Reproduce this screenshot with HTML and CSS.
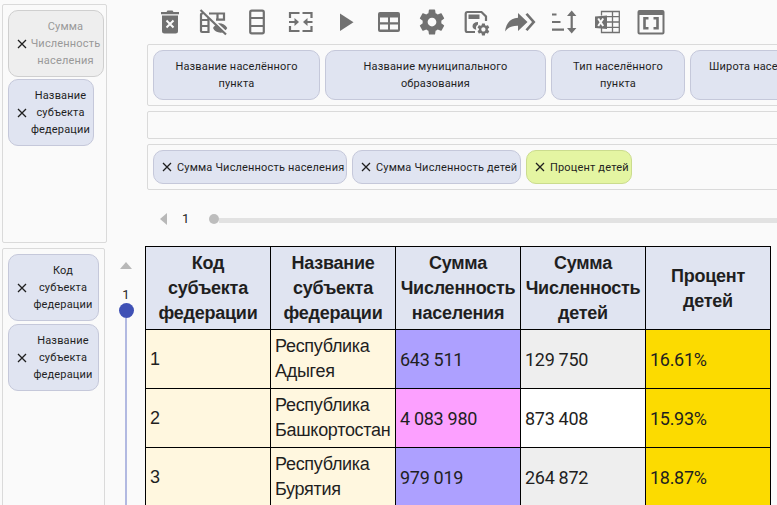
FILE: index.html
```html
<!DOCTYPE html>
<html lang="ru">
<head>
<meta charset="utf-8">
<title>Сводная таблица</title>
<link rel="stylesheet" href="styles.css">
</head>
<body>
<svg class="defs" width="0" height="0"><symbol id="close" viewBox="0 0 12 12"><path d="M2 2 10 10M10 2 2 10" fill="none" stroke="#1f1f1f" stroke-width="1.3"/></symbol></svg>
<div class="app">
  <aside class="side">
    <div class="zone zone-filter">
      <div class="chip tall muted"><svg class="x"><use href="#close"/></svg><span>Сумма<br>Численность<br>населения</span></div>
      <div class="chip tall narrow"><svg class="x"><use href="#close"/></svg><span>Название<br>субъекта<br>федерации</span></div>
    </div>
    <div class="zone zone-rows">
      <div class="chip tall"><svg class="x"><use href="#close"/></svg><span>Код<br>субъекта<br>федерации</span></div>
      <div class="chip tall"><svg class="x"><use href="#close"/></svg><span>Название<br>субъекта<br>федерации</span></div>
    </div>
  </aside>
  <main class="main">
    <nav class="toolbar">
      <svg viewBox="148 0 44 44"><path d="M161 12h5.500l1-1.500h5l1 1.500h5.500v2.200h-18zM162 15.500h16v15.500a2.500 2.500 0 0 1-2.500 2.500h-11a2.500 2.500 0 0 1-2.500-2.500z"/><path class="cut" d="m166.500 20.500 7 7m0-7-7 7"/></svg>
      <svg viewBox="192 0 44 44"><path class="line" d="M203 13.500h-1a1 1 0 0 0-1 1V31a1 1 0 0 0 1 1h6.500V18M201 20h7M201 26h7.500M209 13.500h15v6.200H216M217.500 13.500v6"/><path d="M213 28c1-2 2.500-3 4-3.300l7 7.300c-4 1.700-9.500 0-11-4zM218 23.200c4-.4 7.500 1.600 9.300 4.800-.5.900-1.100 1.600-1.800 2.300z"/><path class="line" d="m200.500 10 25.500 24.500"/></svg>
      <svg viewBox="236 0 44 44"><rect class="line" x="250.200" y="10.700" width="13.600" height="22.600" rx="1.500"/><path class="line" d="M250 18h14M250 26h14"/></svg>
      <svg viewBox="280 0 44 44"><path class="line" d="M290 18v-5h9.500M302.500 13h9v5M290 26v5h9.500M302.500 31h9v-5M289 22h7M312.500 22h-7"/><path d="m294.500 18 4.500 4-4.500 4zM307.500 18l-4.500 4 4.500 4z"/></svg>
      <svg viewBox="324 0 44 44"><path d="M340 13.500v17.500l13.500-8.700z"/></svg>
      <svg viewBox="368 0 44 44"><path fill-rule="evenodd" d="M380 12h18a2 2 0 0 1 2 2v16a2 2 0 0 1-2 2h-18a2 2 0 0 1-2-2V14a2 2 0 0 1 2-2zm0 5.500v4.700h8v-4.700zm10 0v4.700h8v-4.700zm-10 7v5h8v-5zm10 0v5h8v-5z"/></svg>
      <svg viewBox="412 0 44 44"><path transform="translate(417 7) scale(1.250)" d="M19.430 12.980c.04-.32.07-.64.07-.98s-.03-.66-.07-.98l2.110-1.650c.19-.15.24-.42.12-.64l-2-3.460c-.12-.22-.39-.3-.61-.22l-2.490 1c-.52-.4-1.080-.73-1.690-.98l-.38-2.650C14.460 2.180 14.250 2 14 2h-4c-.25 0-.46.18-.49.42l-.38 2.650c-.61.25-1.170.59-1.690.98l-2.490-1c-.23-.09-.49 0-.61.22l-2 3.460c-.13.22-.07.49.12.64l2.110 1.650c-.04.32-.07.65-.07.98s.03.66.07.98l-2.110 1.650c-.19.15-.24.42-.12.64l2 3.460c.12.22.39.3.61.22l2.490-1c.52.4 1.080.73 1.690.98l.38 2.650c.03.24.24.42.49.42h4c.25 0 .46-.18.49-.42l.38-2.650c.61-.25 1.170-.59 1.690-.98l2.490 1c.23.09.49 0 .61-.22l2-3.460c.12-.22.07-.49-.12-.64l-2.110-1.650zM12 15.500c-1.930 0-3.500-1.570-3.500-3.500s1.570-3.500 3.500-3.500 3.500 1.570 3.500 3.500-1.570 3.500-3.500 3.500z"/></svg>
      <svg viewBox="456 0 44 44"><path class="line" d="M475 32h-7.500a1.800 1.800 0 0 1-1.800-1.800V13.800a1.800 1.800 0 0 1 1.800-1.800h14l4.500 4.500V21"/><path d="M468.500 14.500h11v4.500h-11zM478 22v2.500c-2 1-2.500 3-1.700 5.200-2.400-.3-3.800-1.700-3.800-3.500 0-2.400 2-4.200 5.500-4.200z"/><path transform="translate(476.200 22.200) scale(.6)" d="M19.430 12.980c.04-.32.07-.64.07-.98s-.03-.66-.07-.98l2.110-1.650c.19-.15.24-.42.12-.64l-2-3.460c-.12-.22-.39-.3-.61-.22l-2.490 1c-.52-.4-1.080-.73-1.690-.98l-.38-2.650C14.460 2.180 14.250 2 14 2h-4c-.25 0-.46.18-.49.42l-.38 2.650c-.61.25-1.170.59-1.690.98l-2.490-1c-.23-.09-.49 0-.61.22l-2 3.460c-.13.22-.07.49.12.64l2.110 1.650c-.04.32-.07.65-.07.98s.03.66.07.98l-2.110 1.650c-.19.15-.24.42-.12.64l2 3.460c.12.22.39.3.61.22l2.490-1c.52.4 1.080.73 1.690.98l.38 2.650c.03.24.24.42.49.42h4c.25 0 .46-.18.49-.42l.38-2.650c.61-.25 1.170-.59 1.690-.98l2.490 1c.23.09.49 0 .61-.22l2-3.460c.12-.22.07-.49-.12-.64l-2.110-1.650zM12 15.500c-1.930 0-3.500-1.570-3.500-3.500s1.570-3.500 3.500-3.500 3.500 1.570 3.500 3.500-1.570 3.500-3.500 3.500z"/></svg>
      <svg viewBox="500 0 44 44"><path d="M505 31.500c1-8.500 5.500-13.300 13-13.800V13l9.500 9-9.500 9v-5.300c-6-.2-10 1.600-13 5.800z"/><path d="m525.500 14.500 2-1.500 8 9-8 9-2-1.500 6.500-7.500z"/></svg>
      <svg viewBox="544 0 44 44"><path class="line" d="M552 14.500h4.500M552 22h8.500M552 29.700h12M571.700 14v16"/><path d="m567 16 4.700-5.500 4.700 5.500zM567 28l4.700 5.500 4.700-5.500z"/></svg>
      <svg viewBox="588 0 44 44"><path d="M595 16.500 607 15.500v13.500L595 28z"/><path class="thin" d="M601.500 15.500v-4h17.800v21h-17.800V28M607 16.700h12M607 22h12M607 27.300h12M612.500 12v20"/><path class="cut" d="m598.200 18.500 5 7.500m0-7.500-5 7.500"/></svg>
      <svg viewBox="632 0 44 44"><path fill-rule="evenodd" d="M639.500 10h23a2 2 0 0 1 2 2v20.500a2 2 0 0 1-2 2h-23a2 2 0 0 1-2-2V12a2 2 0 0 1 2-2zM639.500 15v17.500h23V15z"/><path class="line bracket" d="M648.500 18.300h-4v10h4M653.500 18.300h4v10h-4"/></svg>
    </nav>
    <div class="zones">
      <div class="zone zone-top">
        <div class="chip w1"><span>Название населённого<br>пункта</span></div>
        <div class="chip w2"><span>Название муниципального<br>образования</span></div>
        <div class="chip w3"><span>Тип населённого<br>пункта</span></div>
        <div class="chip w4"><span>Широта населённого пункта</span></div>
      </div>
      <div class="zone zone-empty"></div>
      <div class="zone zone-values">
        <div class="chip v1"><svg class="x"><use href="#close"/></svg><span>Сумма Численность населения</span></div>
        <div class="chip v2"><svg class="x"><use href="#close"/></svg><span>Сумма Численность детей</span></div>
        <div class="chip v3 green"><svg class="x"><use href="#close"/></svg><span>Процент детей</span></div>
      </div>
    </div>
    <div class="hslider"><i class="arrow-left"></i><span>1</span><i class="hthumb"></i><i class="htrack"></i></div>
    <div class="content">
      <div class="vslider"><i class="arrow-up"></i><span>1</span><i class="vthumb"></i><i class="vtrack"></i></div>
      <table>
        <thead><tr><th>Код<br>субъекта<br>федерации</th><th>Название<br>субъекта<br>федерации</th><th>Сумма<br>Численность<br>населения</th><th>Сумма<br>Численность<br>детей</th><th>Процент<br>детей</th></tr></thead>
        <tbody>
          <tr><td class="dim">1</td><td class="dim">Республика<br>Адыгея</td><td class="violet">643 511</td><td class="gray">129 750</td><td class="gold">16.61%</td></tr>
          <tr><td class="dim">2</td><td class="dim">Республика<br>Башкортостан</td><td class="pink">4 083 980</td><td class="white">873 408</td><td class="gold">15.93%</td></tr>
          <tr><td class="dim">3</td><td class="dim">Республика<br>Бурятия</td><td class="violet">979 019</td><td class="gray">264 872</td><td class="gold">18.87%</td></tr>
        </tbody>
      </table>
    </div>
  </main>
</div>
</body>
</html>
```
FILE: styles.css
```css
* { box-sizing: border-box; }
html, body { margin: 0; height: 505px; overflow: hidden; }
body { background: #fafafa; color: #1f1f1f; font-family: Roboto, sans-serif; }
.defs { display: none; }
.app { display: flex; width: 777px; height: 505px; overflow: hidden; }

.side { flex: none; width: 110px; padding: 4px 0 0 2px; display: flex; flex-direction: column; gap: 5px; }
.zone { display: flex; gap: 5px; padding: 5px; border: 1px solid #dadada; border-radius: 2px; }
.side .zone { flex-direction: column; flex: none; }
.side .zone-filter { width: 105px; height: 239px; gap: 2px; }
.side .zone-rows { width: 103px; height: 290px; gap: 3px; }

.chip { flex: none; display: flex; align-items: center; justify-content: center; border: 1px solid #c5c8da; border-radius: 10px; background: #e0e4f1; font-size: 11px; line-height: 17px; letter-spacing: .17px; text-align: center; white-space: nowrap; }
.chip .x { flex: none; width: 12px; height: 12px; }
.tall { width: 91px; height: 67px; justify-content: flex-start; padding: 0 2px 0 6.500px; }
.tall .x { margin-right: 2.500px; }
.tall span { flex: 1; }
.tall.muted { width: 96px; background: #eee; border-color: #cfcfcf; }
.tall.muted span { color: #999; }
.tall.narrow { width: 86px; }
.green { background: #e4f5a2; border-color: #cbdc8e; }

.main { flex: none; width: 667px; overflow: hidden; }
.toolbar { display: flex; height: 44px; padding-left: 38px; }
.toolbar svg { flex: none; width: 44px; height: 44px; fill: #717171; }
.toolbar .line { fill: none; stroke: #717171; stroke-width: 2.200; }
.toolbar .thin { fill: none; stroke: #717171; stroke-width: 1.300; }
.toolbar .cut { fill: none; stroke: #fafafa; stroke-width: 2; }
.toolbar .bracket { stroke-width: 2.600; }
.zones { display: flex; flex-direction: column; gap: 5px; margin-left: 37px; width: 900px; }
.zone-top { height: 62px; }
.zone-empty { height: 28px; }
.zone-values { height: 46px; }
.w1 { width: 167px; } .w2 { width: 221px; } .w3 { width: 134px; }
.w4 { width: 190px; align-items: flex-start; justify-content: flex-start; padding: 7px 0 0 18px; }
.v1, .v2, .v3 { justify-content: flex-start; padding-left: 6.500px; }
.v1 .x, .v2 .x, .v3 .x { margin-right: 4.500px; }
.v1 { width: 194px; } .v2 { width: 169px; } .v3 { width: 106px; }

.hslider { display: flex; align-items: center; height: 56px; padding: 2px 0 0 50px; font-size: 13px; }
.arrow-left { border: solid transparent; border-width: 6.500px 7px 6.500px 0; border-right-color: #b8b8b8; }
.hslider span { width: 8px; margin: -2px 21px 0 15px; }
.hthumb { width: 10px; height: 10px; border-radius: 50%; background: #bdbdbd; margin-left: -2px; }
.htrack { flex: 1; height: 5px; margin-top: 2px; background: #e2e2e2; }

.content { display: flex; }
.vslider { flex: none; width: 35px; height: 259px; padding: 16px 3px 0 0; display: flex; flex-direction: column; align-items: center; font-size: 13px; }
.arrow-up { border: solid transparent; border-width: 0 6.500px 7px; border-bottom-color: #b8b8b8; }
.vslider span { margin-top: 18px; line-height: 16px; }
.vthumb { flex: none; width: 15px; height: 15px; border-radius: 50%; background: #3f51b5; }
.vtrack { flex: 1; width: 2px; background: #b2b9e1; }

table { flex: none; width: 626px; table-layout: fixed; border-collapse: collapse; font-size: 18px; line-height: 25px; letter-spacing: -.3px; }
th, td { border: 1px solid #000; padding: 4px 0; }
th { height: 83px; padding-bottom: 3px; background: #e0e4f1; font-family: "Liberation Sans", sans-serif; letter-spacing: -.25px; }
td { height: 59px; padding-left: 4px; white-space: nowrap; }
.dim { background: #fff7df; font-family: "Liberation Sans", sans-serif; }
.violet { background: #ada0ff; }
.pink { background: #fca0ff; }
.gray { background: #eee; }
.white { background: #fff; }
.gold { background: #fcdb00; }
```
